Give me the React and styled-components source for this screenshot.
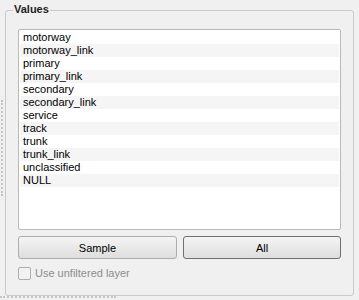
import React from 'react'
import styled, { createGlobalStyle } from 'styled-components'

const GlobalStyle = createGlobalStyle`
  html, body {
    margin: 0;
    padding: 0;
    background: #f0f0f0;
    font-family: 'Liberation Sans', Arial, sans-serif;
    font-size: 11px;
    color: #000;
  }
`

const Page = styled.div`
  display: grid;
  grid-template-columns: 5px 349px 5px;
  grid-template-rows: 10px 286px 4px;
  width: 359px;
  height: 300px;
`

const SideGrip = styled.div`
  grid-column: 1;
  grid-row: 1 / 4;
  width: 2px;
  height: 96px;
  margin: 100px 0 0 1px;
  border-left: 2px dotted #c4c4c4;
  box-sizing: border-box;
`

const BottomGrip = styled.div`
  grid-column: 1 / 3;
  grid-row: 3;
  align-self: end;
  width: 116px;
  height: 2px;
  margin-bottom: 2px;
  border-top: 2px dotted #c4c4c4;
  box-sizing: border-box;
`

const Group = styled.div`
  grid-column: 2;
  grid-row: 2;
  position: relative;
  display: flex;
  flex-direction: column;
  border: 1px solid #c9c9c9;
  border-radius: 3px;
  padding: 18px 12px 0 12px;
  box-sizing: border-box;
`

const GroupTitle = styled.div`
  position: absolute;
  top: -8px;
  left: 7px;
  padding: 0 1px;
  background: #f0f0f0;
  font-weight: bold;
  line-height: 13px;
  color: #1e1e1e;
`

const List = styled.div`
  height: 201px;
  border: 1px solid #b9b9b9;
  border-radius: 2px;
  background: #fff;
  padding: 1px;
  box-sizing: border-box;
  overflow: hidden;
`

const Row = styled.div`
  height: 13px;
  line-height: 13px;
  padding-left: 3px;
  background: ${p => (p.$alt ? '#f5f5f5' : '#fff')};
  white-space: nowrap;
`

const ButtonRow = styled.div`
  display: grid;
  grid-template-columns: 159px 158px;
  gap: 6px;
  margin-top: 6px;
`

const Button = styled.button`
  height: 23px;
  padding: 0;
  font-family: inherit;
  font-size: 11px;
  color: #000;
  border: 1px solid ${p => (p.$default ? '#707070' : '#adadad')};
  border-radius: 3px;
  background: linear-gradient(#f4f4f4, #dedede);
  box-sizing: border-box;
`

const CheckRow = styled.label`
  display: flex;
  align-items: center;
  gap: 4px;
  margin-top: 7px;
  color: #8d8d8d;
  line-height: 14px;
`

const CheckBox = styled.span`
  width: 13px;
  height: 13px;
  border: 1px solid #acacac;
  border-radius: 2px;
  background: #f2f2f2;
  box-sizing: border-box;
`

const values = [
  'motorway',
  'motorway_link',
  'primary',
  'primary_link',
  'secondary',
  'secondary_link',
  'service',
  'track',
  'trunk',
  'trunk_link',
  'unclassified',
  'NULL',
]

export default function App() {
  return (
    <>
      <GlobalStyle />
      <Page>
        <SideGrip />
        <Group>
          <GroupTitle>Values</GroupTitle>
          <List>
            {values.map((v, i) => (
              <Row key={v} $alt={i % 2 === 1}>
                {v}
              </Row>
            ))}
          </List>
          <ButtonRow>
            <Button>Sample</Button>
            <Button $default>All</Button>
          </ButtonRow>
          <CheckRow>
            <CheckBox />
            Use unfiltered layer
          </CheckRow>
        </Group>
        <BottomGrip />
      </Page>
    </>
  )
}
